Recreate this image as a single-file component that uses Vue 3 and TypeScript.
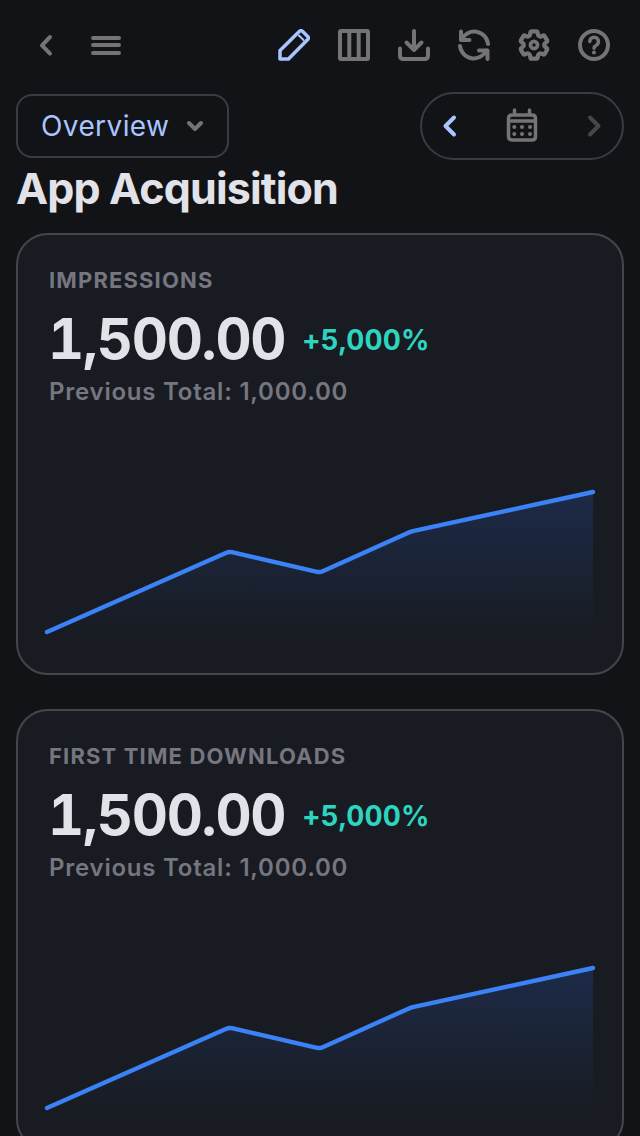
<script setup lang="ts">
interface Metric { title: string; value: string; delta: string; previous: string }

const metrics: Metric[] = [
  { title: 'IMPRESSIONS', value: '1,500.00', delta: '+5,000%', previous: 'Previous Total: 1,000.00' },
  { title: 'FIRST TIME DOWNLOADS', value: '1,500.00', delta: '+5,000%', previous: 'Previous Total: 1,000.00' },
]

const points: [number, number][] = [[-1, 227], [181, 146.500], [272, 167.500], [363, 126.500], [545, 87]]

function roundedLine(pts: [number, number][], r: number): string {
  let d = `M${pts[0][0]} ${pts[0][1]}`
  for (let i = 1; i < pts.length - 1; i++) {
    const [px, py] = pts[i - 1]
    const [x, y] = pts[i]
    const [nx, ny] = pts[i + 1]
    const a = Math.hypot(x - px, y - py)
    const b = Math.hypot(nx - x, ny - y)
    d += ` L${(x - ((x - px) / a) * r).toFixed(1)} ${(y - ((y - py) / a) * r).toFixed(1)}`
    d += ` Q${x} ${y} ${(x + ((nx - x) / b) * r).toFixed(1)} ${(y + ((ny - y) / b) * r).toFixed(1)}`
  }
  const last = pts[pts.length - 1]
  return `${d} L${last[0]} ${last[1]}`
}

const linePath = roundedLine(points, 3)
const areaPath = `${linePath} L545 227 L-1 227 Z`
</script>

<template>
  <div class="page">
    <header class="toolbar">
      <div class="toolbar-left">
        <svg class="icon" viewBox="0 0 32 32"><path d="M20 8 12 16.300l8 8.300" /></svg>
        <svg class="icon" viewBox="0 0 32 32"><path d="M3 9h26M3 16h26M3 24h26" /></svg>
      </div>
      <div class="toolbar-right">
        <svg class="icon accent pencil" viewBox="0 0 32 32">
          <path d="M2 30v-8.500L21.500 2.300q1.500-1.300 3 0l5.200 5.200q1.300 1.500 0 3L10.500 30Z" />
          <path class="fine" d="m21 6.500 4.500 4.500" />
        </svg>
        <svg class="icon" viewBox="0 0 32 32">
          <rect x="2" y="2" width="28" height="28" rx="1" />
          <path d="M11.300 2v28M20.700 2v28" />
        </svg>
        <svg class="icon" viewBox="0 0 32 32">
          <path d="M2 19.500v7q0 3.500 3.500 3.500h21q3.500 0 3.500-3.500v-7M16 2v18.500M8.500 13.500l7.500 7.500 7.500-7.500" />
        </svg>
        <svg class="icon" viewBox="0 0 32 32">
          <path d="M3 2.500v8.500h8.500M29.500 30v-8.500H21" />
          <path d="M3.500 10.500A14 14 0 0 1 30 15M28.500 21.500A14 14 0 0 1 2 17" />
        </svg>
        <svg class="icon" viewBox="0 0 24 24">
          <path class="thin" d="M9.594 3.940c.09-.542.56-.94 1.110-.94h2.593c.55 0 1.020.398 1.110.94l.213 1.281c.063.374.313.686.645.870.074.04.147.083.22.127.325.196.72.257 1.075.124l1.217-.456a1.125 1.125 0 0 1 1.370.49l1.296 2.247a1.125 1.125 0 0 1-.26 1.431l-1.003.827c-.293.241-.438.613-.43.992a7.723 7.723 0 0 1 0 .255c-.008.378.137.75.43.991l1.004.827c.424.35.534.955.26 1.430l-1.298 2.247a1.125 1.125 0 0 1-1.369.491l-1.217-.456c-.355-.133-.75-.072-1.076.124a6.470 6.470 0 0 1-.22.128c-.331.183-.581.495-.644.869l-.213 1.281c-.09.543-.56.94-1.110.94h-2.594c-.55 0-1.019-.398-1.110-.94l-.213-1.281c-.062-.374-.312-.686-.644-.87a6.520 6.520 0 0 1-.22-.127c-.325-.196-.72-.257-1.076-.124l-1.217.456a1.125 1.125 0 0 1-1.369-.49l-1.297-2.247a1.125 1.125 0 0 1 .26-1.431l1.004-.827c.292-.24.437-.613.43-.991a6.932 6.932 0 0 1 0-.255c.007-.38-.138-.751-.43-.992l-1.004-.827a1.125 1.125 0 0 1-.26-1.430l1.297-2.247a1.125 1.125 0 0 1 1.370-.491l1.216.456c.356.133.751.072 1.076-.124.072-.044.146-.086.22-.128.332-.183.582-.495.644-.869l.214-1.280Z" transform="translate(-1.700 -1.700) scale(1.142)" />
          <circle class="thin" cx="12" cy="12" r="2.700" />
        </svg>
        <svg class="icon" viewBox="0 0 32 32">
          <circle cx="16" cy="16" r="14" />
          <path class="mid" d="M11.800 12.500a4.300 4.300 0 1 1 6.500 3.700c-1.400.8-2.300 1.700-2.300 3" />
          <circle class="dot" cx="16" cy="23.500" r="2" />
        </svg>
      </div>
    </header>

    <div class="controls">
      <button class="select" type="button">
        <span class="select-text">Overview</span>
        <svg class="chevron-small" viewBox="0 0 16 16"><path d="M2 5l6 6 6-6" /></svg>
      </button>
      <div class="date-nav">
        <svg class="icon accent" viewBox="0 0 32 32"><path d="M20 7.500 11.500 16l8.500 8.500" /></svg>
        <svg class="icon calendar" viewBox="0 0 32 32">
          <path d="M8.500 0v5M23.500 0v5M6 5h20q3.500 0 3.500 3.500v18q0 3.500-3.500 3.500H6q-3.500 0-3.500-3.500v-18Q2.500 5 6 5ZM2.500 11h27" />
          <g class="dots">
            <circle cx="8.300" cy="17" r="2" /><circle cx="16" cy="17" r="2" /><circle cx="24" cy="17" r="2" />
            <circle cx="8.300" cy="24" r="2" /><circle cx="16" cy="24" r="2" /><circle cx="24" cy="24" r="2" />
          </g>
        </svg>
        <svg class="icon muted" viewBox="0 0 32 32"><path d="M12 7.500 20.500 16 12 24.500" /></svg>
      </div>
    </div>

    <h1 class="title">App Acquisition</h1>

    <section v-for="m in metrics" :key="m.title" class="card">
      <div class="card-label">{{ m.title }}</div>
      <div class="value-row">
        <span class="value">{{ m.value }}</span>
        <span class="delta">{{ m.delta }}</span>
      </div>
      <div class="previous">{{ m.previous }}</div>
      <svg class="chart" viewBox="0 0 546 240" width="546" height="240">
        <defs>
          <linearGradient :id="`fill-${m.title.length}`" gradientUnits="userSpaceOnUse" x1="0" y1="86" x2="0" y2="232">
            <stop offset="0" stop-color="#1d2b49" />
            <stop offset="1" stop-color="#1d2b49" stop-opacity="0" />
          </linearGradient>
        </defs>
        <path :d="areaPath" :fill="`url(#fill-${m.title.length})`" />
        <path class="line" :d="linePath" />
      </svg>
    </section>
  </div>
</template>

<style scoped>
.page {
  box-sizing: border-box;
  width: 640px;
  height: 1136px;
  overflow: hidden;
  padding: 29px 16px 0;
  background: #121317;
  font-family: Inter, "Liberation Sans", sans-serif;
}
.toolbar {
  display: flex;
  justify-content: space-between;
  height: 32px;
  margin-bottom: 31px;
}
.toolbar-left {
  display: flex;
  gap: 28px;
  padding-left: 14px;
}
.toolbar-right {
  display: flex;
  gap: 28px;
  padding-right: 14px;
}
.icon {
  flex: none;
  width: 32px;
  height: 32px;
  fill: none;
  stroke: #747474;
  stroke-width: 4;
  stroke-linecap: round;
  stroke-linejoin: round;
}
.icon.calendar {
  overflow: visible;
  stroke-width: 3.500;
}
.icon.pencil {
  stroke-width: 3.500;
}
.icon .thin {
  stroke-width: 2.800;
}
.icon .mid {
  stroke-width: 3.500;
}
.icon .fine {
  stroke-width: 2;
}
.icon .dot,
.icon .dots circle {
  fill: #747474;
  stroke: none;
}
.icon.accent {
  stroke: #a9c5ff;
}
.icon.muted {
  stroke: #45464a;
}
.controls {
  display: flex;
  justify-content: space-between;
  align-items: center;
  height: 68px;
}
.select {
  box-sizing: border-box;
  display: flex;
  align-items: center;
  justify-content: space-between;
  width: 213px;
  height: 64px;
  padding: 0 24px 0 23px;
  border: 2px solid #3b3c41;
  border-radius: 16px;
  background: transparent;
  font: inherit;
}
.select-text {
  color: #a9c5ff;
  font-size: 28px;
  font-weight: 400;
  letter-spacing: 0.4px;
}
.chevron-small {
  width: 16px;
  height: 16px;
  fill: none;
  stroke: #747474;
  stroke-width: 4;
  stroke-linecap: round;
  stroke-linejoin: round;
}
.date-nav {
  box-sizing: border-box;
  display: flex;
  align-items: center;
  justify-content: space-between;
  width: 204px;
  height: 68px;
  padding: 0 12px;
  border: 2px solid #3b3c41;
  border-radius: 34px;
}
.title {
  margin: 0 0 17px;
  color: #e2e3e8;
  font-size: 43px;
  font-weight: 700;
  line-height: 56px;
  letter-spacing: -0.850px;
}
.card {
  box-sizing: border-box;
  height: 442px;
  margin-bottom: 34px;
  padding: 31px 30px 0;
  border: 2px solid #45464a;
  border-radius: 32px;
  background: #181b22;
}
.card-label {
  padding-left: 1px;
  color: #75767f;
  font-size: 22px;
  font-weight: 700;
  line-height: 28px;
  letter-spacing: 1.150px;
}
.value-row {
  display: flex;
  align-items: center;
  gap: 17px;
  height: 68px;
  margin-top: 11px;
  font-feature-settings: "tnum";
}
.value {
  color: #e2e3e8;
  font-size: 56px;
  font-weight: 700;
  letter-spacing: -1.250px;
}
.delta {
  position: relative;
  top: 1px;
  color: #2dd4bf;
  font-size: 28px;
  font-weight: 700;
  letter-spacing: 0.1px;
}
.previous {
  margin-top: 5px;
  padding-left: 1px;
  color: #75767f;
  font-size: 24px;
  font-weight: 600;
  line-height: 28px;
  letter-spacing: 0.770px;
}
.chart {
  display: block;
  margin-top: -1px;
  overflow: visible;
}
.line {
  fill: none;
  stroke: #3b82f6;
  stroke-width: 4.400;
  stroke-linecap: round;
  stroke-linejoin: round;
}
</style>

<style>
html,
body {
  margin: 0;
  background: #121317;
  overflow: hidden;
}
</style>
